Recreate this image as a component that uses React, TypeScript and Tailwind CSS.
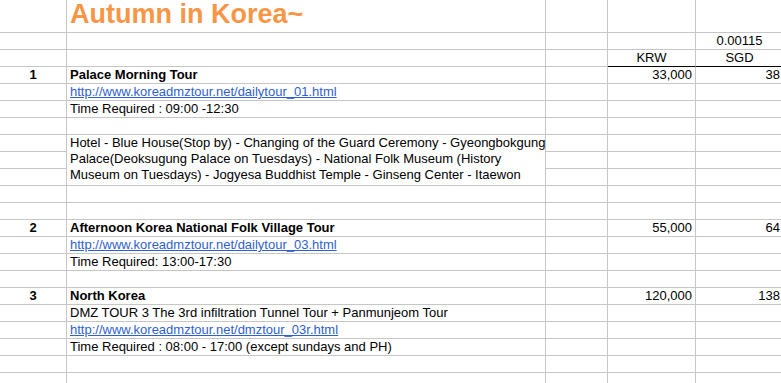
type Row = {
  a?: string
  b?: string
  bold?: boolean
  link?: boolean
  d?: string
  e?: string
}

const cell = 'border-r border-b border-[#c6c6c6] px-[3px] text-[13px] leading-[16px] whitespace-nowrap'

const TOP: Row[] = [
  { e: '0.00115' },
  { d: 'KRW', e: 'SGD' },
  { a: '1', b: 'Palace Morning Tour', bold: true, d: '33,000', e: '38' },
  { b: 'http://www.koreadmztour.net/dailytour_01.html', link: true },
  { b: 'Time Required : 09:00 -12:30' },
  {},
]

const BOTTOM: Row[] = [
  {},
  {},
  { a: '2', b: 'Afternoon Korea National Folk Village Tour', bold: true, d: '55,000', e: '64' },
  { b: 'http://www.koreadmztour.net/dailytour_03.html', link: true },
  { b: 'Time Required: 13:00-17:30' },
  {},
  { a: '3', b: 'North Korea', bold: true, d: '120,000', e: '138' },
  { b: 'DMZ TOUR 3 The 3rd infiltration Tunnel Tour + Panmunjeom Tour' },
  { b: 'http://www.koreadmztour.net/dmztour_03r.html', link: true },
  { b: 'Time Required : 08:00 - 17:00 (except sundays and PH)' },
  {},
  {},
]

function SheetRow({ r, i }: { r: Row; i: number }) {
  const header = i === 1 && r.d === 'KRW'
  return (
    <>
      <div className={`${cell} text-center font-bold`}>{r.a}</div>
      <div className={`${cell} ${r.bold ? 'font-bold' : ''}`}>
        {r.link ? <span className="text-[#2f5fd0] underline">{r.b}</span> : r.b}
      </div>
      <div className={cell}></div>
      <div className={`${cell} ${header ? 'text-center border-b-black' : 'text-right'}`}>{r.d}</div>
      <div className={`${cell} ${header || r.e === '0.00115' ? 'text-center' : 'text-right'} ${header ? 'border-b-black' : ''}`}>{r.e}</div>
    </>
  )
}

export default function App() {
  return (
    <div className="w-[781px] h-[383px] overflow-hidden bg-white text-black" style={{ fontFamily: '"Liberation Sans", Arial, sans-serif' }}>
      <div className="grid grid-cols-[67px_479px_62px_88px_88px] grid-rows-[33px] auto-rows-[17px] w-[784px]">
        {/* title row */}
        <div className="border-r border-b border-[#c6c6c6]"></div>
        <div className="border-r border-b border-[#c6c6c6] px-[3px] text-[27px] leading-[29px] font-bold text-[#f79646] whitespace-nowrap">
          Autumn in Korea~
        </div>
        <div className="border-r border-b border-[#c6c6c6]"></div>
        <div className="border-r border-b border-[#c6c6c6]"></div>
        <div className="border-r border-b border-[#c6c6c6]"></div>

        {TOP.map((r, i) => (
          <SheetRow key={`t${i}`} r={r} i={i} />
        ))}

        {/* itinerary block spans three rows in column B */}
        <div className={cell}></div>
        <div className={`${cell} row-span-3 whitespace-normal`}>
          Hotel - Blue House(Stop by) - Changing of the Guard Ceremony - Gyeongbokgung<br />
          Palace(Deoksugung Palace on Tuesdays) - National Folk Museum (History<br />
          Museum on Tuesdays) - Jogyesa Buddhist Temple - Ginseng Center - Itaewon
        </div>
        <div className={cell}></div>
        <div className={cell}></div>
        <div className={cell}></div>
        <div className={cell}></div>
        <div className={cell}></div>
        <div className={cell}></div>
        <div className={cell}></div>
        <div className={cell}></div>
        <div className={cell}></div>
        <div className={cell}></div>
        <div className={cell}></div>

        {BOTTOM.map((r, i) => (
          <SheetRow key={`b${i}`} r={r} i={-1} />
        ))}
      </div>
    </div>
  )
}
